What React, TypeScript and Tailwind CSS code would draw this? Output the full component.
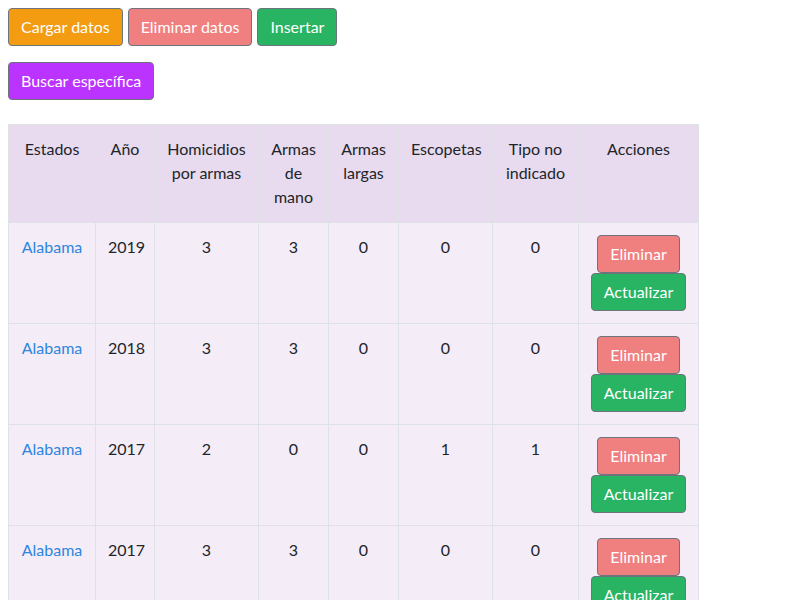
import React from 'react';

interface Fila {
  estado: string;
  anio: number;
  homicidios: number;
  mano: number;
  largas: number;
  escopetas: number;
  noIndicado: number;
}

const filas: Fila[] = [
  { estado: 'Alabama', anio: 2019, homicidios: 3, mano: 3, largas: 0, escopetas: 0, noIndicado: 0 },
  { estado: 'Alabama', anio: 2018, homicidios: 3, mano: 3, largas: 0, escopetas: 0, noIndicado: 0 },
  { estado: 'Alabama', anio: 2017, homicidios: 2, mano: 0, largas: 0, escopetas: 1, noIndicado: 1 },
  { estado: 'Alabama', anio: 2017, homicidios: 3, mano: 3, largas: 0, escopetas: 0, noIndicado: 0 },
];

const btn = 'inline-block h-[38px] px-3 rounded-[4px] border border-[#6c757d] text-white text-base leading-6 align-middle';

const th = 'border border-[#dee2e6] px-3 pt-3 pb-[13px] align-top font-normal';
const td = 'border border-[#dee2e6] p-3 align-top';

export default function App() {
  return (
    <div className="p-2 text-base text-[#212529] bg-white min-h-[600px]" style={{ fontFamily: '"Segoe UI", Lato, "Noto Sans", sans-serif' }}>
      <div className="flex gap-[5px]">
        <button className={`${btn} bg-[#f39c12]`}>Cargar datos</button>
        <button className={`${btn} bg-[#f08080]`}>Eliminar datos</button>
        <button className={`${btn} bg-[#28b463]`}>Insertar</button>
      </div>
      <div className="mt-4">
        <button className={`${btn} bg-[#bb33ff]`}>Buscar específica</button>
      </div>

      <table className="mt-6 border-collapse text-center leading-6 table-fixed w-[690px]">
        <colgroup>
          <col className="w-[87px]" />
          <col className="w-[59px]" />
          <col className="w-[104px]" />
          <col className="w-[70px]" />
          <col className="w-[70px]" />
          <col className="w-[94px]" />
          <col className="w-[86px]" />
          <col className="w-[120px]" />
        </colgroup>
        <thead className="bg-[#e8daef]">
          <tr>
            <th className={th}>Estados</th>
            <th className={th}>Año</th>
            <th className={th}>Homicidios<br />por armas</th>
            <th className={th}>Armas<br />de<br />mano</th>
            <th className={th}>Armas<br />largas</th>
            <th className={th}>Escopetas</th>
            <th className={th}>Tipo no<br />indicado</th>
            <th className={th}>Acciones</th>
          </tr>
        </thead>
        <tbody className="bg-[#f4ecf7]">
          {filas.map((f, i) => (
            <tr key={i}>
              <td className={`${td} text-[#2d86e0]`}>{f.estado}</td>
              <td className={td}>{f.anio}</td>
              <td className={td}>{f.homicidios}</td>
              <td className={td}>{f.mano}</td>
              <td className={td}>{f.largas}</td>
              <td className={td}>{f.escopetas}</td>
              <td className={td}>{f.noIndicado}</td>
              <td className={`${td} px-1`}>
                <div className="flex flex-col items-center">
                  <button className={`${btn} bg-[#f08080]`}>Eliminar</button>
                  <button className={`${btn} bg-[#28b463]`}>Actualizar</button>
                </div>
              </td>
            </tr>
          ))}
        </tbody>
      </table>
    </div>
  );
}
